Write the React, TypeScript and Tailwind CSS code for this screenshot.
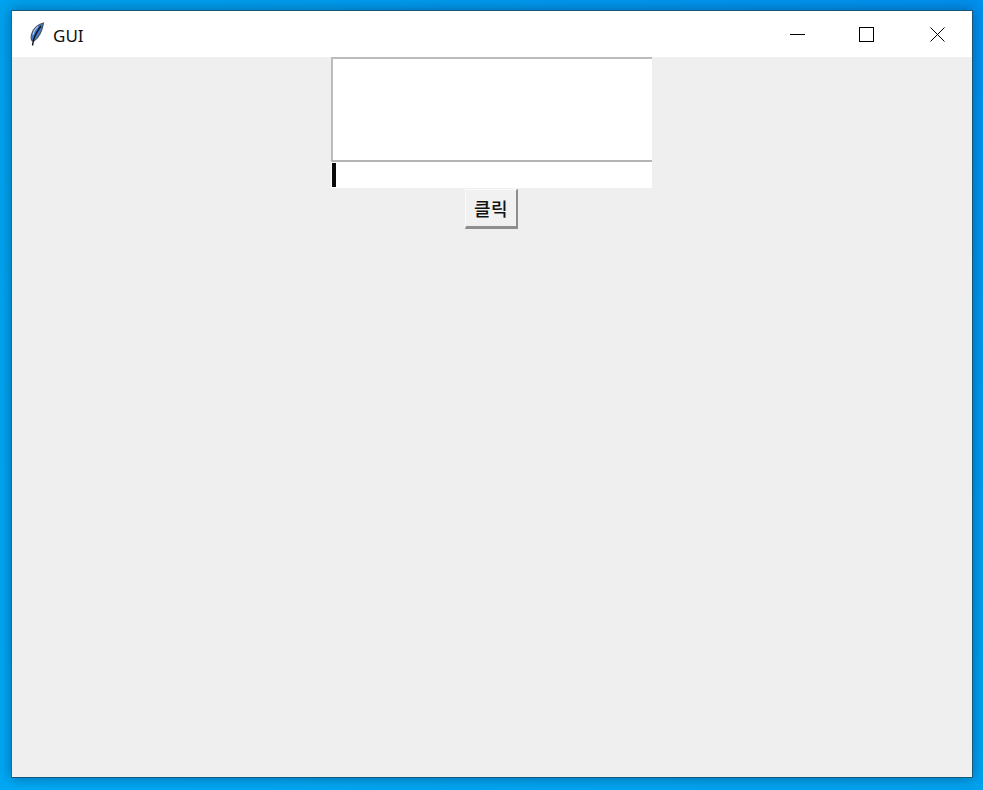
export default function App() {
  return (
    <div className="w-[983px] h-[790px] overflow-hidden bg-linear-to-bl from-[#0090ee] via-[#00a2ee] to-[#00a8f4] pt-[10px] pl-[11px] pr-[10px] pb-[12px]">
      <div className="w-[962px] h-[768px] flex flex-col border border-[#14587c] border-l-[#1b6a93] shadow-[0_0_12px_rgba(0,45,90,0.5)] bg-[#efefef]">
        <div className="h-[46px] shrink-0 bg-white flex items-center" style={{ fontFamily: '"Noto Sans", "Open Sans", sans-serif' }}>
          <svg className="ml-[14px] w-[22px] h-[28px] shrink-0" viewBox="0 0 22 28">
            <path d="M17.5 3 C12 4 6.5 9 5.5 14.5 C4.8 18 5 20 6.5 21 L8 21 C12.5 18 16 12 17.5 3Z" fill="#4279c6" stroke="#4a5562" strokeWidth="1.2" />
            <path d="M15 6 C12 10 9 15 7.5 20 L6.5 25.5" fill="none" stroke="#10151c" strokeWidth="1.4" />
            <path d="M12 6.5 C9.5 8.5 7.5 11.5 7 15" fill="none" stroke="#a3c5f0" strokeWidth="1.2" />
          </svg>
          <span className="ml-[5px] mt-[3px] text-[17px] leading-none text-[#111]">GUI</span>
          <div className="ml-auto flex items-center">
            <svg className="w-[15px] h-[15px] shrink-0 mr-[54px]" viewBox="0 0 15 15"><path d="M0 7.5H15" stroke="#000" strokeWidth="1" /></svg>
            <svg className="w-[15px] h-[15px] shrink-0 mr-[56px]" viewBox="0 0 15 15"><rect x="0.5" y="0.5" width="14" height="14" fill="none" stroke="#000" strokeWidth="1" /></svg>
            <svg className="w-[15px] h-[15px] shrink-0 mr-[27px]" viewBox="0 0 15 15"><path d="M0.5 0.5L14.5 14.5M14.5 0.5L0.5 14.5" stroke="#000" strokeWidth="1" /></svg>
          </div>
        </div>
        <div className="flex flex-col items-center flex-1 min-h-0 pr-[1px]">
          <div className="w-[321px] h-[103px] bg-white border-t-2 border-l-2 border-[#bcbcbc]" />
          <div className="w-[321px] h-[28px] bg-white border-t-2 border-[#b4b4b4] pl-[1px] pt-[1px]">
            <div className="w-[4px] h-[24px] bg-[#0a0a0a]" />
          </div>
          <div className="mt-[1px] w-[53px] h-[40px] bg-[#f1f1f1] border-t border-l border-t-[#fafafa] border-l-[#fafafa] border-r-[2px] border-b-[3px] border-r-[#8e8e8e] border-b-[#8e8e8e] flex items-center justify-center text-[18px] tracking-[0.5px] font-medium text-[#111]" style={{ fontFamily: '"Noto Sans CJK KR", sans-serif' }}>
            클릭
          </div>
        </div>
      </div>
    </div>
  );
}
